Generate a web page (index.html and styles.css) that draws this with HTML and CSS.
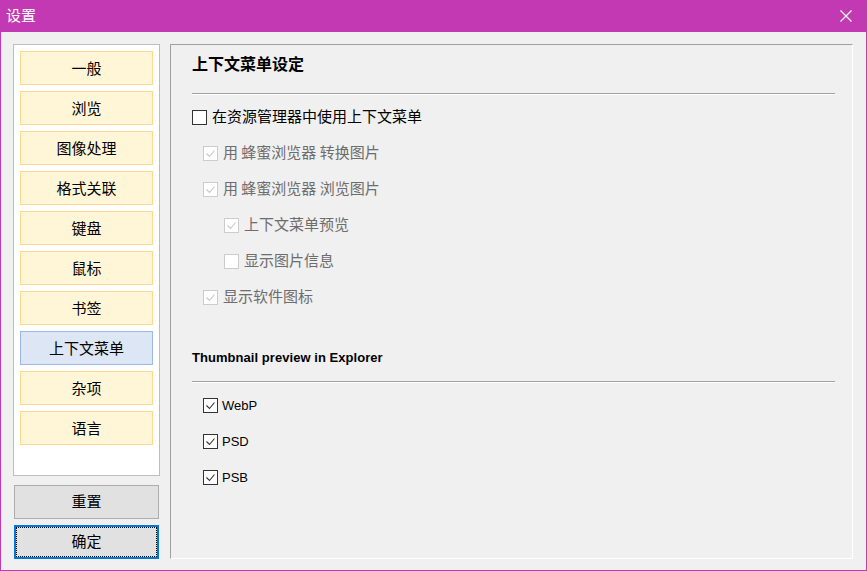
FILE: index.html
```html
<!DOCTYPE html>
<html lang="zh-CN">
<head>
<meta charset="utf-8">
<title>设置</title>
<link rel="stylesheet" href="styles.css">
</head>
<body>
<div class="window">
  <div class="titlebar">
    <span class="title">设置</span>
    <svg class="close" width="12" height="12" viewBox="0 0 12 12"><path d="M0.5 0.5 L11.5 11.5 M11.5 0.5 L0.5 11.5" stroke="#fff" stroke-width="1.2" fill="none"/></svg>
  </div>
  <div class="content">
    <div class="sidebar">
      <div class="navlist">
        <div class="nav-item">一般</div>
        <div class="nav-item">浏览</div>
        <div class="nav-item">图像处理</div>
        <div class="nav-item">格式关联</div>
        <div class="nav-item">键盘</div>
        <div class="nav-item">鼠标</div>
        <div class="nav-item">书签</div>
        <div class="nav-item selected">上下文菜单</div>
        <div class="nav-item">杂项</div>
        <div class="nav-item">语言</div>
      </div>
      <div class="btn">重置</div>
      <div class="btn focused"><span class="focus-ring">确定</span></div>
    </div>
    <div class="panel">
      <div class="section-title cjk">上下文菜单设定</div>
      <div class="sep"></div>
      <div class="rows">
        <div class="row">
          <span class="box"></span><span class="label">在资源管理器中使用上下文菜单</span>
        </div>
        <div class="row ind1 disabled">
          <span class="box"><svg width="13" height="13" viewBox="0 0 13 13"><path d="M2.5 6.5 L5.5 9.5 L10.5 3.5" stroke="#c6c6c6" stroke-width="1.1" fill="none"/></svg></span><span class="label">用 蜂蜜浏览器 转换图片</span>
        </div>
        <div class="row ind1 disabled">
          <span class="box"><svg width="13" height="13" viewBox="0 0 13 13"><path d="M2.5 6.5 L5.5 9.5 L10.5 3.5" stroke="#c6c6c6" stroke-width="1.1" fill="none"/></svg></span><span class="label">用 蜂蜜浏览器 浏览图片</span>
        </div>
        <div class="row ind2 disabled">
          <span class="box"><svg width="13" height="13" viewBox="0 0 13 13"><path d="M2.5 6.5 L5.5 9.5 L10.5 3.5" stroke="#c6c6c6" stroke-width="1.1" fill="none"/></svg></span><span class="label">上下文菜单预览</span>
        </div>
        <div class="row ind2 disabled">
          <span class="box"></span><span class="label">显示图片信息</span>
        </div>
        <div class="row ind1 disabled">
          <span class="box"><svg width="13" height="13" viewBox="0 0 13 13"><path d="M2.5 6.5 L5.5 9.5 L10.5 3.5" stroke="#c6c6c6" stroke-width="1.1" fill="none"/></svg></span><span class="label">显示软件图标</span>
        </div>
      </div>
      <div class="section-title latin">Thumbnail preview in Explorer</div>
      <div class="sep sep2"></div>
      <div class="rows">
        <div class="row ind1">
          <span class="box"><svg width="13" height="13" viewBox="0 0 13 13"><path d="M2.5 6.5 L5.5 9.5 L10.5 3.5" stroke="#333" stroke-width="1.1" fill="none"/></svg></span><span class="label en">WebP</span>
        </div>
        <div class="row ind1">
          <span class="box"><svg width="13" height="13" viewBox="0 0 13 13"><path d="M2.5 6.5 L5.5 9.5 L10.5 3.5" stroke="#333" stroke-width="1.1" fill="none"/></svg></span><span class="label en">PSD</span>
        </div>
        <div class="row ind1">
          <span class="box"><svg width="13" height="13" viewBox="0 0 13 13"><path d="M2.5 6.5 L5.5 9.5 L10.5 3.5" stroke="#333" stroke-width="1.1" fill="none"/></svg></span><span class="label en">PSB</span>
        </div>
      </div>
    </div>
  </div>
</div>
</body>
</html>
```
FILE: styles.css
```css
* { box-sizing: border-box; }
html, body { margin: 0; padding: 0; }
body {
  width: 867px;
  height: 571px;
  overflow: hidden;
  font-family: "Noto Sans CJK SC", "Noto Sans", sans-serif;
  color: #000;
  background: #F0F0F0;
}
.window {
  width: 867px;
  height: 571px;
  display: flex;
  flex-direction: column;
}
.titlebar {
  height: 32px;
  flex: 0 0 32px;
  background: #C239B3;
  display: flex;
  align-items: center;
  justify-content: space-between;
  padding: 0 15px 0 6px;
}
.title {
  color: #fff;
  font-size: 15px;
  line-height: 20px;
  padding-bottom: 2px;
}
.close { display: block; }
.content {
  flex: 1;
  display: flex;
  background: #F0F0F0;
  border-left: 1px solid #C239B3;
  border-right: 1px solid #C239B3;
  border-bottom: 1px solid #C239B3;
  padding: 12px 13px 11px 12px;
  gap: 10px;
}
.sidebar {
  width: 147px;
  flex: 0 0 147px;
  display: flex;
  flex-direction: column;
}
.navlist {
  height: 432px;
  background: #fff;
  border: 1px solid #BEBEBE;
  padding: 6px 6px;
  display: flex;
  flex-direction: column;
  gap: 6px;
}
.nav-item {
  height: 34px;
  flex: 0 0 34px;
  background: #FFF6D7;
  border: 1px solid #FFD88E;
  display: flex;
  align-items: center;
  justify-content: center;
  font-size: 15px;
  padding-bottom: 2px;
}
.nav-item.selected {
  background: #DDE6F4;
  border-color: #9CB6E6;
}
.btn {
  margin-left: 1px;
  width: 145px;
  height: 34px;
  background: #E1E1E1;
  border: 1px solid #ADADAD;
  display: flex;
  align-items: center;
  justify-content: center;
  font-size: 15px;
  margin-top: 9px;
  padding-bottom: 3px;
}
.btn + .btn { margin-top: 6px; }
.btn.focused {
  border: 2px solid #0078D7;
  padding: 0;
}
.focus-ring {
  flex: 1;
  align-self: stretch;
  display: flex;
  align-items: center;
  justify-content: center;
  border: 1px dotted #000;
  padding-bottom: 3px;
}
.panel {
  width: 683px;
  flex: 0 0 683px;
  border-top: 1px solid #A0A0A0;
  border-left: 1px solid #A0A0A0;
  border-right: 1px solid #fff;
  border-bottom: 1px solid #fff;
  padding: 9px 17px 0 21px;
  display: flex;
  flex-direction: column;
}
.section-title {
  height: 20px;
  display: flex;
  align-items: center;
  font-weight: bold;
}
.section-title.cjk { font-size: 16px; padding-bottom: 3px; }
.section-title.latin {
  font-family: "Liberation Sans", Arial, sans-serif;
  font-size: 13px;
  margin-top: 32px;
  letter-spacing: 0.05px;
}
.sep {
  height: 2px;
  border-top: 1px solid #A0A0A0;
  border-bottom: 1px solid #fff;
  margin-top: 19px;
}
.sep.sep2 { margin-top: 14px; }
.rows {
  margin-top: 4px;
  display: flex;
  flex-direction: column;
}
.row {
  height: 36px;
  display: flex;
  align-items: center;
  font-size: 15px;
}
.row.ind1 { padding-left: 11px; }
.row.ind2 { padding-left: 32px; }
.box {
  width: 15px;
  height: 15px;
  flex: 0 0 15px;
  border: 1px solid #333;
  background: #fff;
  display: block;
}
.box svg { display: block; }
.label { margin-left: 5px; line-height: 20px; padding-bottom: 2px; }
.label.en {
  font-family: "Liberation Sans", Arial, sans-serif;
  font-size: 13px;
  margin-left: 4px;
  padding-bottom: 0;
  padding-top: 1px;
}
.row.disabled { color: #6D6D6D; }
.row.disabled .box { border-color: #CCCCCC; }
```
